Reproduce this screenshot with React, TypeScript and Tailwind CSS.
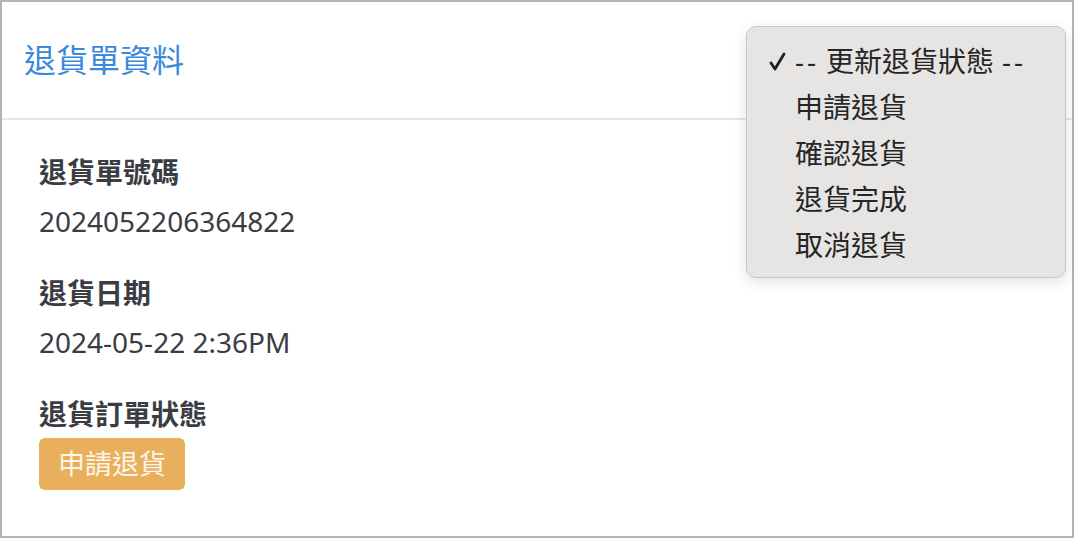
import React from "react";

const options = ["申請退貨", "確認退貨", "退貨完成", "取消退貨"];

function Field({ label, children }: { label: string; children: React.ReactNode }) {
  return (
    <div className="mb-[30px]">
      <div className="text-[28px] leading-[42px] font-bold text-[#3a3d44]">{label}</div>
      <div className="mt-[7px] text-[28px] leading-[42px] text-[#3a3d44]">{children}</div>
    </div>
  );
}

function StatusMenu() {
  return (
    <div className="absolute left-[744px] top-[24px] w-[320px] rounded-[10px] border border-[#c9c8c6] bg-[#e6e5e3] pt-[11px] pb-[9px] shadow-[0_4px_14px_rgba(0,0,0,0.12)]">
      <div className="relative flex h-[46px] items-center pl-[48px] text-[28px] text-[#262626]">
        <svg
          className="absolute left-[22px] top-[14px] h-[19px] w-[17px]"
          viewBox="0 0 17 19"
          fill="none"
          stroke="#1f1f1f"
          strokeWidth={2.8}
          strokeLinecap="round"
          strokeLinejoin="round"
        >
          <path d="M2 11 L6 17 L15 2" />
        </svg>
        <span className="tracking-[3px]">--</span>
        <span className="ml-[7px]">更新退貨狀態</span>
        <span className="ml-[8px] tracking-[3px]">--</span>
      </div>
      {options.map((o) => (
        <div key={o} className="flex h-[46px] items-center pl-[48px] text-[28px] text-[#262626]">
          {o}
        </div>
      ))}
    </div>
  );
}

export default function App() {
  return (
    <div
      className="relative h-[538px] w-[1074px] border-2 border-[#b3b3b3] bg-white"
      style={{ fontFamily: '"Noto Sans", "Noto Sans CJK TC", sans-serif' }}
    >
      <div className="flex h-[118px] items-center border-b-2 border-[#e6e6e6] pl-[22px]">
        <h2 className="text-[32px] font-normal text-[#3b89dc]">退貨單資料</h2>
      </div>
      <div className="pl-[37px] pt-[31px]">
        <Field label="退貨單號碼">2024052206364822</Field>
        <Field label="退貨日期">2024-05-22 2:36PM</Field>
        <div className="text-[28px] leading-[42px] font-bold text-[#3a3d44]">退貨訂單狀態</div>
        <span className="mt-[3px] inline-flex h-[52px] items-center rounded-[6px] bg-[#e8b05c] px-[19px] text-[27px] text-[#fdf5e8]">
          申請退貨
        </span>
      </div>
      <StatusMenu />
    </div>
  );
}
